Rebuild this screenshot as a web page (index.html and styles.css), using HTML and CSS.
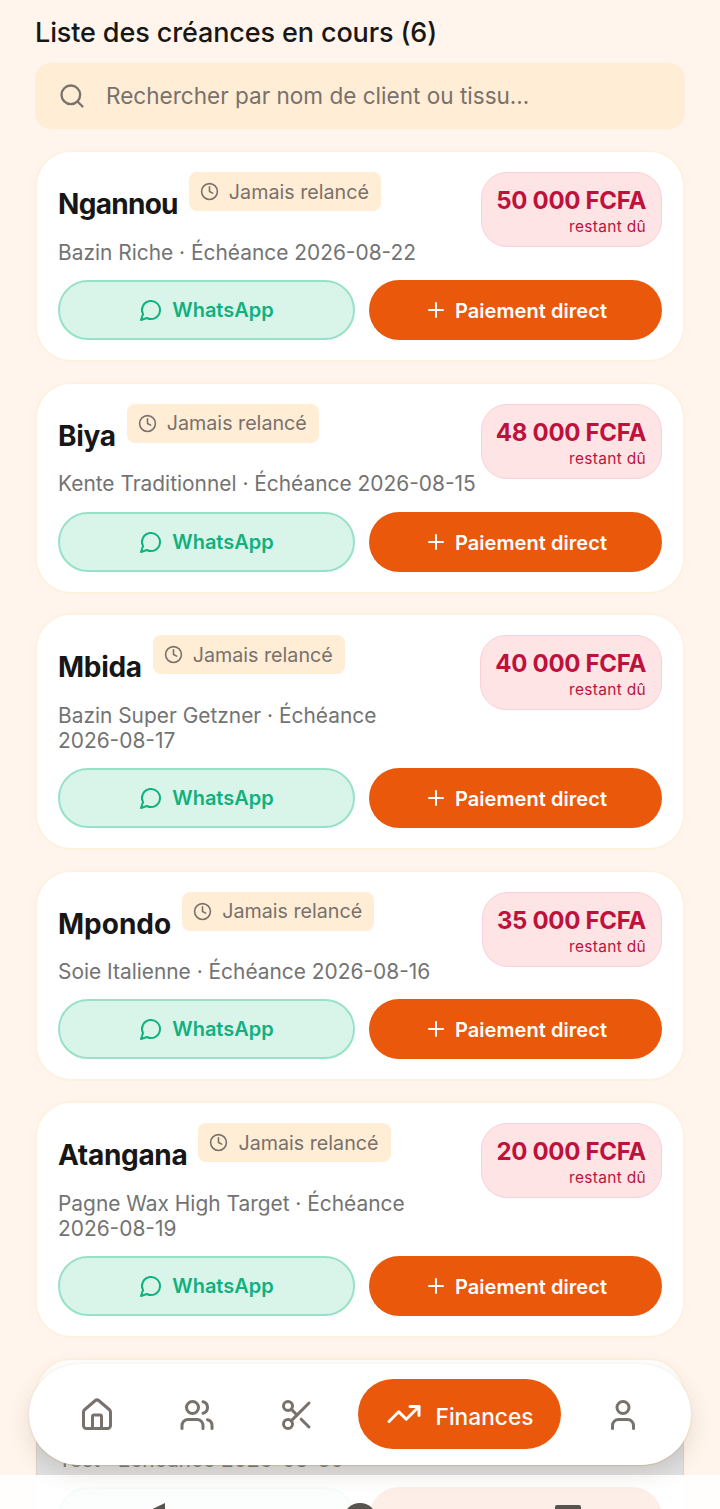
FILE: index.html
```html
<!DOCTYPE html>
<html lang="fr">
<head>
<meta charset="utf-8">
<title>Créances</title>
<link rel="stylesheet" href="styles.css">
</head>
<body>
<svg class="defs" width="0" height="0" aria-hidden="true">
  <symbol id="i-clock" viewBox="0 0 24 24"><circle cx="12" cy="12" r="10"/><path d="M12 6v6l4 2"/></symbol>
  <symbol id="i-chat" viewBox="0 0 24 24"><path d="M7.9 20A9 9 0 1 0 4 16.1L2 22Z"/></symbol>
  <symbol id="i-plus" viewBox="0 0 24 24"><path d="M5 12h14M12 5v14"/></symbol>
</svg>
<main class="page">
  <h1 class="title">Liste des créances en cours (6)</h1>
  <div class="search">
    <svg class="search-icon" viewBox="0 0 24 24"><circle cx="11" cy="11" r="8"/><path d="m21 21-4.3-4.3"/></svg>
    <span class="search-text">Rechercher par nom de client ou tissu...</span>
  </div>

  <article class="card">
    <div class="card-top">
      <div class="info">
        <div class="name-row"><span class="name name-tight">Ngannou</span><span class="badge"><svg class="ico-clock"><use href="#i-clock"/></svg>Jamais relancé</span></div>
        <p class="meta">Bazin Riche · Échéance <span class="date">2026-08-22</span></p>
      </div>
      <div class="due"><strong>50 000 FCFA</strong><small>restant dû</small></div>
    </div>
    <div class="actions">
      <a class="btn wa"><svg class="ico-chat"><use href="#i-chat"/></svg>WhatsApp</a>
      <a class="btn pay"><svg class="ico-plus"><use href="#i-plus"/></svg><span class="pay-label">Paiement direct</span></a>
    </div>
  </article>

  <article class="card">
    <div class="card-top">
      <div class="info">
        <div class="name-row"><span class="name">Biya</span><span class="badge"><svg class="ico-clock"><use href="#i-clock"/></svg>Jamais relancé</span></div>
        <p class="meta">Kente Traditionnel · Échéance <span class="date">2026-08-15</span></p>
      </div>
      <div class="due"><strong>48 000 FCFA</strong><small>restant dû</small></div>
    </div>
    <div class="actions">
      <a class="btn wa"><svg class="ico-chat"><use href="#i-chat"/></svg>WhatsApp</a>
      <a class="btn pay"><svg class="ico-plus"><use href="#i-plus"/></svg><span class="pay-label">Paiement direct</span></a>
    </div>
  </article>

  <article class="card">
    <div class="card-top">
      <div class="info">
        <div class="name-row"><span class="name">Mbida</span><span class="badge"><svg class="ico-clock"><use href="#i-clock"/></svg>Jamais relancé</span></div>
        <p class="meta">Bazin Super Getzner · Échéance <span class="date">2026-08-17</span></p>
      </div>
      <div class="due"><strong>40 000 FCFA</strong><small>restant dû</small></div>
    </div>
    <div class="actions">
      <a class="btn wa"><svg class="ico-chat"><use href="#i-chat"/></svg>WhatsApp</a>
      <a class="btn pay"><svg class="ico-plus"><use href="#i-plus"/></svg><span class="pay-label">Paiement direct</span></a>
    </div>
  </article>

  <article class="card">
    <div class="card-top">
      <div class="info">
        <div class="name-row"><span class="name name-loose">Mpondo</span><span class="badge"><svg class="ico-clock"><use href="#i-clock"/></svg>Jamais relancé</span></div>
        <p class="meta">Soie Italienne · Échéance <span class="date">2026-08-16</span></p>
      </div>
      <div class="due"><strong>35 000 FCFA</strong><small>restant dû</small></div>
    </div>
    <div class="actions">
      <a class="btn wa"><svg class="ico-chat"><use href="#i-chat"/></svg>WhatsApp</a>
      <a class="btn pay"><svg class="ico-plus"><use href="#i-plus"/></svg><span class="pay-label">Paiement direct</span></a>
    </div>
  </article>

  <article class="card">
    <div class="card-top">
      <div class="info">
        <div class="name-row"><span class="name">Atangana</span><span class="badge"><svg class="ico-clock"><use href="#i-clock"/></svg>Jamais relancé</span></div>
        <p class="meta">Pagne Wax High Target · Échéance <span class="date">2026-08-19</span></p>
      </div>
      <div class="due"><strong>20 000 FCFA</strong><small>restant dû</small></div>
    </div>
    <div class="actions">
      <a class="btn wa"><svg class="ico-chat"><use href="#i-chat"/></svg>WhatsApp</a>
      <a class="btn pay"><svg class="ico-plus"><use href="#i-plus"/></svg><span class="pay-label">Paiement direct</span></a>
    </div>
  </article>

  <article class="card">
    <div class="card-top">
      <div class="info">
        <div class="name-row"><span class="name">Test</span></div>
        <p class="meta">Test · Échéance <span class="date">2026-08-30</span></p>
      </div>
    </div>
    <div class="actions">
      <a class="btn wa"></a>
      <a class="btn pay"></a>
    </div>
  </article>
</main>

<div class="nav-shade"></div>
<div class="system-bar">
  <svg class="sys sys-back" viewBox="0 0 30 30"><path d="M25 0v30L0 12z"/></svg>
  <svg class="sys sys-home" viewBox="0 0 34 34"><circle cx="17" cy="17" r="17"/></svg>
  <svg class="sys sys-recent" viewBox="0 0 26 26"><rect width="26" height="26" rx="2"/></svg>
</div>

<nav class="nav">
  <a class="nav-item"><svg viewBox="0 0 24 24"><path d="M15 21v-8a1 1 0 0 0-1-1h-4a1 1 0 0 0-1 1v8"/><path d="M3 10a2 2 0 0 1 .7-1.5l7-6a2 2 0 0 1 2.6 0l7 6A2 2 0 0 1 21 10v9a2 2 0 0 1-2 2H5a2 2 0 0 1-2-2z"/></svg></a>
  <a class="nav-item"><svg viewBox="0 0 24 24"><path d="M16 21v-2a4 4 0 0 0-4-4H6a4 4 0 0 0-4 4v2"/><circle cx="9" cy="7" r="4"/><path d="M22 21v-2a4 4 0 0 0-3-3.87"/><path d="M16 3.13a4 4 0 0 1 0 7.75"/></svg></a>
  <a class="nav-item"><svg viewBox="0 0 24 24"><circle cx="6" cy="6" r="3"/><path d="M8.12 8.12 12 12"/><path d="M20 4 8.12 15.88"/><circle cx="6" cy="18" r="3"/><path d="M14.8 14.8 20 20"/></svg></a>
  <a class="nav-active"><svg viewBox="0 0 24 24"><path d="m22 7-8.5 8.5-5-5L2 17"/><path d="M16 7h6v6"/></svg><span class="nav-label">Finances</span></a>
  <a class="nav-item"><svg viewBox="0 0 24 24"><path d="M19 21v-2a4 4 0 0 0-4-4H9a4 4 0 0 0-4 4v2"/><circle cx="12" cy="7" r="4"/></svg></a>
</nav>
</body>
</html>
```
FILE: styles.css
```css
* { box-sizing: border-box; }
html, body { margin: 0; padding: 0; }
body {
  width: 720px;
  height: 1509px;
  overflow: hidden;
  position: relative;
  background: #fff5ec;
  font-family: Inter, "Liberation Sans", sans-serif;
  color: #171717;
}
.defs { position: absolute; }
.page { padding: 15px 35px 0 35px; }
.title {
  margin: 0 0 12px;
  font-size: 27px;
  line-height: 36px;
  font-weight: 500;
  letter-spacing: -0.12px;
  color: #171717;
}
.search {
  height: 66px;
  margin-bottom: 21.3px;
  border-radius: 16px;
  background: #ffedd5;
  display: flex;
  align-items: center;
  gap: 20px;
  padding-left: 23px;
  font-size: 22.55px;
  color: #78716c;
}
.search-text { margin-bottom: 2px; }
.search-icon {
  width: 28px; height: 28px;
  fill: none; stroke: #78716c; stroke-width: 2; stroke-linecap: round; stroke-linejoin: round;
}
.card {
  background: #fff;
  border: 2px solid #fef1e0;
  border-radius: 36px;
  padding: 20px 21px;
  margin-bottom: 19.7px;
}
.card-top { display: flex; justify-content: space-between; gap: 2px; align-items: flex-start; }
.info { flex: 1; min-width: 0; }
.name-row { display: flex; gap: 11px; height: 67.4px; align-items: flex-start; }
.name { font-size: 28px; font-weight: 700; line-height: 36px; margin-top: 14px; letter-spacing: -0.3px; }
.name-tight { letter-spacing: -0.7px; }
.name-loose { letter-spacing: 0; }
.badge {
  display: flex; align-items: center; gap: 10px;
  height: 39px; padding: 0 12px 0 11px;
  border-radius: 8px;
  background: #ffedd5;
  color: #78716c;
  font-size: 19.7px;
}
.ico-clock { width: 19px; height: 19px; fill: none; stroke: #78716c; stroke-width: 2; stroke-linecap: round; stroke-linejoin: round; }
.meta { margin: 0; font-size: 20.9px; line-height: 25px; color: #737373; }
.date { white-space: nowrap; }
.due {
  flex: none;
  display: flex; flex-direction: column; align-items: flex-end;
  height: 75px;
  padding: 14px 15px 0 14px;
  border: 1.5px solid #fbcfd8;
  border-radius: 26px;
  background: #ffe4e6;
  color: #be123c;
}
.due strong { font-size: 24px; line-height: 28px; font-weight: 700; letter-spacing: -0.3px; }
.due small { font-size: 15.5px; line-height: 24px; letter-spacing: 0.3px; }
.actions { display: flex; gap: 14px; margin-top: 15.4px; }
.btn {
  height: 60px; border-radius: 30px;
  display: flex; align-items: center; justify-content: center; gap: 9px;
  font-size: 20px; font-weight: 600;
}
.wa { flex: 0 0 297px; background: #d9f5ea; border: 2px solid #97e2c6; color: #10b07f; }
.pay { flex: 0 0 293px; gap: 7px; background: #ea580c; color: #fff; letter-spacing: 0.07px; }
.pay-label { margin-top: 2px; }
.ico-chat { width: 24px; height: 24px; fill: none; stroke: #10b07f; stroke-width: 2; stroke-linecap: round; stroke-linejoin: round; }
.ico-plus { width: 24px; height: 24px; fill: none; stroke: #fff; stroke-width: 2; stroke-linecap: round; stroke-linejoin: round; }
.nav-shade {
  position: absolute; left: 36px; top: 1440px; width: 648px; height: 35px;
  background: linear-gradient(to bottom, rgba(110,115,125,.28), rgba(110,115,125,.22));
}
.system-bar {
  position: absolute; left: 0; right: 0; top: 1475px; height: 34px;
  background: rgba(255,255,255,0.9);
}
.sys { position: absolute; fill: #57534e; }
.sys-back { left: 140px; top: 28px; width: 30px; height: 30px; }
.sys-home { left: 343px; top: 28px; width: 34px; height: 34px; }
.sys-recent { left: 555px; top: 30px; width: 26px; height: 26px; }
.nav {
  position: absolute; left: 29px; top: 1364px;
  width: 662px; height: 101px;
  background: #fff;
  border-radius: 50px;
  box-shadow: 0 1px 1px rgba(190,160,120,.4), 0 0 1px rgba(205,175,135,.35), 0 8px 22px rgba(120,90,50,.16);
  display: flex; align-items: center;
  padding-left: 28px;
}
.nav-item { width: 80px; display: flex; justify-content: center; margin-right: 20px; }
.nav-item svg { width: 36px; height: 36px; fill: none; stroke: #78716c; stroke-width: 2; stroke-linecap: round; stroke-linejoin: round; }
.nav-active {
  width: 203px; height: 70px; border-radius: 35px;
  background: #ea580c; color: #fff;
  display: flex; align-items: center; justify-content: center; gap: 14px;
  font-size: 22.7px; font-weight: 500;
  margin: 0 22px 2px 1px;
}
.nav-active svg { width: 36px; height: 36px; fill: none; stroke: #fff; stroke-width: 2; stroke-linecap: round; stroke-linejoin: round; }
.nav-label { margin-top: 6px; }
```
